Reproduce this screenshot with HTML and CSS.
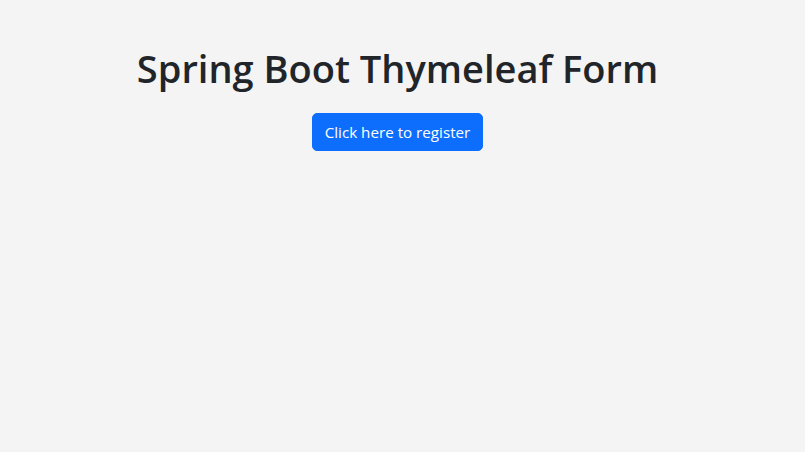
FILE: index.html
```html
<!DOCTYPE html>
<html lang="en">
<head>
<meta charset="utf-8">
<title>Spring Boot Thymeleaf Form</title>
<link rel="stylesheet" href="styles.css">
</head>
<body>
<main class="page">
  <h1 class="title">Spring Boot Thymeleaf Form</h1>
  <a class="btn" href="#">Click here to register</a>
</main>
</body>
</html>
```
FILE: styles.css
```css
html, body {
  margin: 0;
  padding: 0;
  background: #f4f4f4;
}
body {
  font-family: "Open Sans", "Noto Sans", "Liberation Sans", sans-serif;
  color: #212529;
}
.page {
  display: flex;
  flex-direction: column;
  align-items: center;
  padding: 45px 10px 0 0;
}
.title {
  margin: 0 0 22px;
  font-size: 38px;
  font-weight: 600;
  line-height: 46px;
}
.btn {
  display: inline-block;
  box-sizing: border-box;
  height: 38px;
  padding: 6px 12px;
  border: 1px solid #0d6efd;
  border-radius: 5px;
  background: #0d6efd;
  color: #fff;
  font-size: 15.2px;
  line-height: 24px;
  text-decoration: none;
}
```
